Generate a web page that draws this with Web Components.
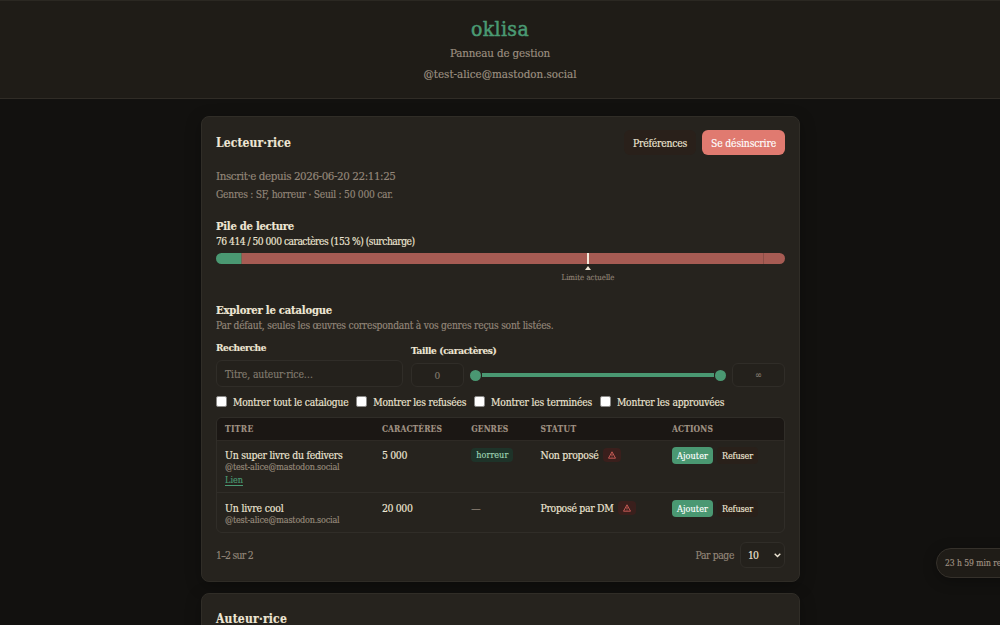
<!DOCTYPE html>
<html lang="fr">
<head>
<meta charset="utf-8">
<title>oklisa</title>
<style>
    html, body {
        height: 100%;
        margin: 0;
        overflow: hidden;
        background: #12110f;
        font-family: "DejaVu Serif Condensed", "DejaVu Serif", serif;
        font-stretch: condensed;
        color: #eee6d5;
    }
</style>
</head>
<body>
<ok-app></ok-app>
<script>
// Single line of text spread over a fixed width
class OkText extends HTMLElement {
    constructor() {
        super()
        this.attachShadow({ mode: 'open' })
        this.shadowRoot.innerHTML = /*html*/`
        <style>
            :host { display: inline-block; white-space: nowrap; flex: none; font-size: 11px; -webkit-text-stroke: .15px currentColor; }
            span { display: inline-block; }
        </style>
        <span><slot></slot></span>
        `
    }

    connectedCallback() {
        const width = Number(this.getAttribute('w'))
        if(this.hasAttribute('size')) {
            this.style.fontSize = this.getAttribute('size') + 'px'
        }
        if(width) {
            const span = this.shadowRoot.querySelector('span')
            const natural = span.getBoundingClientRect().width
            const count = this.textContent.length
            span.style.letterSpacing = (width - natural) / count + 'px'
            this.style.width = width + 'px'
        }
    }
}

class OkHeader extends HTMLElement {
    constructor() {
        super()
        this.attachShadow({ mode: 'open' })
        this.shadowRoot.innerHTML = /*html*/`
        <style>
            :host {
                display: flex;
                flex-direction: column;
                align-items: center;
                box-sizing: border-box;
                height: 99px;
                padding-top: 10px;
                background: #1f1c17;
                border-top: 1px solid #2b2822;
                border-bottom: 1px solid #302c26;
                color: #9d9081;
            }
            h1 { margin: 0; height: 30px; line-height: 29px; font-weight: normal; color: #4a9a73; }
            h1 ok-text { -webkit-text-stroke: .5px currentColor; }
            p { margin: 0; height: 21px; line-height: 21px; }
        </style>
        <h1><ok-text w="58" size="21">oklisa</ok-text></h1>
        <p><ok-text w="100" size="11.5">Panneau de gestion</ok-text></p>
        <p><ok-text w="153" size="11.5">@test-alice@mastodon.social</ok-text></p>
        `
    }
}

class OkCard extends HTMLElement {
    constructor() {
        super()
        this.attachShadow({ mode: 'open' })
        this.shadowRoot.innerHTML = /*html*/`
        <style>
            :host {
                display: block;
                box-sizing: border-box;
                width: 599px;
                padding: 13px 14px;
                background: #26231e;
                border: 1px solid #302d27;
                border-radius: 8px;
                box-shadow: 0 4px 16px rgba(0, 0, 0, .28);
            }
            header { display: flex; align-items: center; gap: 6px; height: 25px; }
            h2 { display: flex; margin: 0 auto 0 0; padding-top: 2px; line-height: 25px; }
        </style>
        <header><h2><slot name="title"></slot></h2><slot name="actions"></slot></header>
        <slot></slot>
        `
    }
}

class OkButton extends HTMLElement {
    constructor() {
        super()
        this.attachShadow({ mode: 'open' })
        this.shadowRoot.innerHTML = /*html*/`
        <style>
            :host {
                display: inline-flex;
                align-items: center;
                justify-content: center;
                box-sizing: border-box;
                height: 25px;
                padding: 0 9px;
                border-radius: 6px;
                background: #29201a;
            }
            :host([small]) { height: 17px; padding: 0 5px; border-radius: 4px; }
            :host([kind=danger]) { background: #e07a70; color: #fff; }
            :host([kind=primary]) { background: #4a9872; color: #fff; }
        </style>
        <slot></slot>
        `
    }
}

class OkPile extends HTMLElement {
    constructor() {
        super()
        this.attachShadow({ mode: 'open' })
        this.shadowRoot.innerHTML = /*html*/`
        <style>
            :host { display: block; position: relative; height: 30px; margin-top: 5px; }
            .bar { display: flex; height: 11px; border-radius: 6px; overflow: hidden; }
            .bar i { box-sizing: border-box; background: #a65b53; border-right: 1px solid #8b4e47; }
            .bar i:first-child { width: 26px; background: #4a9872; border-color: #6c6b55; }
            .bar i:nth-child(2) { width: 522px; }
            .bar i:last-child { flex: 1; border: 0; }
            .limit {
                position: absolute;
                top: 0;
                left: 345.5px;
                width: 53px;
                display: flex;
                flex-direction: column;
                align-items: center;
                color: #8d8073;
            }
            .limit b { width: 2px; height: 11px; background: #f3eadb; }
            .limit svg { display: block; margin-top: 2px; width: 6px; height: 4px; }
            .limit ok-text { line-height: 12px; margin-top: 2px; }
        </style>
        <div class="bar"><i></i><i></i><i></i></div>
        <div class="limit">
            <b></b>
            <svg viewBox="0 0 6 4"><path d="M3 0L6 4H0Z" fill="#eee6d5"/></svg>
            <ok-text w="53" size="7.8">Limite actuelle</ok-text>
        </div>
        `
    }
}

class OkField extends HTMLElement {
    constructor() {
        super()
        this.attachShadow({ mode: 'open' })
        this.shadowRoot.innerHTML = /*html*/`
        <style>
            :host {
                display: flex;
                align-items: center;
                box-sizing: border-box;
                height: 24px;
                padding: 0 8px;
                border: 1px solid #302d28;
                border-radius: 6px;
                background: #24211c;
                color: #837c70;
            }
            :host([center]) { justify-content: center; }
        </style>
        <slot></slot>
        `
    }
}

class OkRange extends HTMLElement {
    constructor() {
        super()
        this.attachShadow({ mode: 'open' })
        this.shadowRoot.innerHTML = /*html*/`
        <style>
            :host { display: flex; align-items: center; gap: 1px; height: 24px; }
            i { width: 11px; height: 11px; border-radius: 50%; background: #4a9872; }
            b { flex: 1; height: 4px; background: #4a9872; }
        </style>
        <i></i><b></b><i></i>
        `
    }
}

class OkCheck extends HTMLElement {
    constructor() {
        super()
        this.attachShadow({ mode: 'open' })
        this.shadowRoot.innerHTML = /*html*/`
        <style>
            :host { display: flex; align-items: center; gap: 6px; height: 15px; }
            i { box-sizing: border-box; width: 11px; height: 11px; background: #fff; border: 1px solid #8a8987; border-radius: 2px; }
        </style>
        <i></i><slot></slot>
        `
    }
}

class OkTag extends HTMLElement {
    constructor() {
        super()
        this.attachShadow({ mode: 'open' })
        this.shadowRoot.innerHTML = /*html*/`
        <style>
            :host {
                display: inline-flex;
                align-items: center;
                justify-content: center;
                box-sizing: border-box;
                height: 14px;
                padding: 0 5px;
                border-radius: 4px;
                background: #1e3329;
                color: #9fd5b5;
            }
            :host([warn]) { width: 18px; background: #3a1f1c; }
            svg { width: 8px; height: 8px; }
            :host(:not([warn])) svg { display: none; }
        </style>
        <svg viewBox="0 0 8 8" fill="none" stroke="#d4605a" stroke-width=".9" stroke-linejoin="round">
            <path d="M4 .8L7.5 7.2H.5ZM4 2.8V5M4 5.6V6.4"/>
        </svg>
        <slot></slot>
        `
    }
}

class OkCatalogue extends HTMLElement {
    constructor() {
        super()
        this.attachShadow({ mode: 'open' })
        this.shadowRoot.innerHTML = /*html*/`
        <style>
            :host {
                display: block;
                box-sizing: border-box;
                height: 116px;
                margin-top: 8px;
                border: 1px solid #302d28;
                border-radius: 6px;
                overflow: hidden;
            }
            .row {
                display: grid;
                grid-template-columns: 157px 89.3px 69.2px 131.5px 1fr;
                box-sizing: border-box;
                padding-left: 8px;
            }
            .head { height: 23px; align-items: center; background: #1b1714; color: #a09283; font-weight: bold; border-bottom: 1px solid #2e2a25; }
            .head div { display: flex; }
            .book { height: 52px; padding-top: 6px; border-bottom: 1px solid #302d28; }
            .book:last-child { height: 40px; padding-top: 7px; border: 0; }
            .line { display: flex; align-items: center; gap: 5px; height: 15px; }
            .actions { gap: 4px; height: 17px; }
            .author { height: 10px; color: #988b7c; }
            .link { height: 15px; color: #4a9a73; }
            .link u { display: flex; align-items: center; height: 10px; margin-top: 1px; border-bottom: 1px solid #4a9a73; text-decoration: none; }
            .muted { color: #94877a; }
        </style>
        <div class="row head">
            <div><ok-text w="28.5" size="8.4">TITRE</ok-text></div>
            <div><ok-text w="60" size="8.4">CARACTÈRES</ok-text></div>
            <div><ok-text w="37" size="8.4">GENRES</ok-text></div>
            <div><ok-text w="36" size="8.4">STATUT</ok-text></div>
            <div><ok-text w="41" size="8.4">ACTIONS</ok-text></div>
        </div>
        <div class="row book">
            <div>
                <div class="line"><ok-text w="117.5" size="10.4">Un super livre du fedivers</ok-text></div>
                <div class="line author"><ok-text w="114.5" size="9">@test-alice@mastodon.social</ok-text></div>
                <div class="line link"><u><ok-text w="18" size="9">Lien</ok-text></u></div>
            </div>
            <div class="line"><ok-text w="25" size="10.4">5 000</ok-text></div>
            <div class="line"><ok-tag><ok-text w="32" size="9">horreur</ok-text></ok-tag></div>
            <div class="line"><ok-text w="58" size="10.4">Non proposé</ok-text><ok-tag warn></ok-tag></div>
            <div class="line actions">
                <ok-button small kind="primary"><ok-text w="31" size="9">Ajouter</ok-text></ok-button>
                <ok-button small><ok-text w="31" size="9">Refuser</ok-text></ok-button>
            </div>
        </div>
        <div class="row book">
            <div>
                <div class="line"><ok-text w="58.5" size="10.4">Un livre cool</ok-text></div>
                <div class="line author"><ok-text w="114.5" size="9">@test-alice@mastodon.social</ok-text></div>
            </div>
            <div class="line"><ok-text w="30.5" size="10.4">20 000</ok-text></div>
            <div class="line muted"><ok-text w="10" size="10.4">—</ok-text></div>
            <div class="line"><ok-text w="73" size="10.4">Proposé par DM</ok-text><ok-tag warn></ok-tag></div>
            <div class="line actions">
                <ok-button small kind="primary"><ok-text w="31" size="9">Ajouter</ok-text></ok-button>
                <ok-button small><ok-text w="31" size="9">Refuser</ok-text></ok-button>
            </div>
        </div>
        `
    }
}

class OkApp extends HTMLElement {
    constructor() {
        super()
        this.attachShadow({ mode: 'open' })
        this.shadowRoot.innerHTML = /*html*/`
        <style>
            :host { display: block; height: 625px; overflow: hidden; position: relative; }
            main { display: flex; flex-direction: column; gap: 11px; width: 599px; margin: 17px 0 0 201px; }
            .line { display: flex; align-items: center; }
            .since { height: 20px; margin-top: 11px; }
            .genres { height: 16px; }
            .title { height: 17px; margin-top: 15px; font-weight: bold; }
            .explore { height: 16px; margin-top: 19px; }
            .count, .hint { height: 14px; }
            .muted { color: #94877a; }
            .filters { display: flex; gap: 8px; align-items: flex-end; height: 47px; margin-top: 8px; }
            .search { width: 187px; }
            .search ok-field { height: 27px; margin-top: 5px; }
            .size { flex: 1; }
            .label { height: 16px; font-weight: bold; }
            .controls { display: flex; margin-top: 5px; }
            .controls ok-field { width: 53px; }
            .controls ok-range { flex: 1; margin: 0 6px; }
            .checks { display: flex; gap: 7.8px; margin-top: 7px; }
            .checks ok-text { padding-top: 1px; }
            .foot { height: 26px; margin-top: 9px; gap: 6px; }
            .foot .muted { display: flex; margin-right: auto; }
            .foot .muted + .muted { margin-right: 0; }
            .foot ok-field { width: 45px; height: 26px; color: #eee6d5; gap: 16px; padding: 0 3px 0 7px; }
            ok-text[slot=title] { font-weight: bold; }
            .second { height: 120px; padding-top: 12px; }
            .session {
                position: absolute;
                top: 548px;
                left: 936px;
                box-sizing: border-box;
                width: 130px;
                height: 30px;
                padding-left: 8px;
                border: 1px solid #35312b;
                border-radius: 15px;
                background: #1f1c17;
                color: #a09384;
                box-shadow: 0 3px 14px rgba(0, 0, 0, .3);
            }
        </style>
        <ok-header></ok-header>
        <main>
            <ok-card>
                <ok-text slot="title" w="75" size="12">Lecteur·rice</ok-text>
                <ok-button slot="actions"><ok-text w="54" size="10.3">Préférences</ok-text></ok-button>
                <ok-button slot="actions" kind="danger"><ok-text w="65" size="10.3">Se désinscrire</ok-text></ok-button>
                <div class="line since muted"><ok-text w="179.5" size="11.5">Inscrit·e depuis 2026-06-20 22:11:25</ok-text></div>
                <div class="line genres muted"><ok-text w="177" size="10.2">Genres : SF, horreur · Seuil : 50 000 car.</ok-text></div>
                <div class="line title"><ok-text w="78" size="11.2">Pile de lecture</ok-text></div>
                <div class="line count"><ok-text w="198.5" size="10.2">76 414 / 50 000 caractères (153 %) (surcharge)</ok-text></div>
                <ok-pile></ok-pile>
                <div class="line title explore"><ok-text w="116" size="11.2">Explorer le catalogue</ok-text></div>
                <div class="line hint muted"><ok-text w="337.5" size="10.2">Par défaut, seules les œuvres correspondant à vos genres reçus sont listées.</ok-text></div>
                <div class="filters">
                    <div class="search">
                        <div class="line label"><ok-text w="50" size="10">Recherche</ok-text></div>
                        <ok-field><ok-text w="88" size="10.3">Titre, auteur·rice…</ok-text></ok-field>
                    </div>
                    <div class="size">
                        <div class="line label"><ok-text w="85.5" size="10">Taille (caractères)</ok-text></div>
                        <div class="controls">
                            <ok-field center><ok-text w="6" size="10">0</ok-text></ok-field>
                            <ok-range></ok-range>
                            <ok-field center><ok-text w="7" size="9">∞</ok-text></ok-field>
                        </div>
                    </div>
                </div>
                <div class="checks">
                    <ok-check><ok-text w="115.5" size="10.2">Montrer tout le catalogue</ok-text></ok-check>
                    <ok-check><ok-text w="93" size="10.2">Montrer les refusées</ok-text></ok-check>
                    <ok-check><ok-text w="101" size="10.2">Montrer les terminées</ok-text></ok-check>
                    <ok-check><ok-text w="107.5" size="10.2">Montrer les approuvées</ok-text></ok-check>
                </div>
                <ok-catalogue></ok-catalogue>
                <div class="line foot">
                    <span class="muted"><ok-text w="37" size="10.3">1–2 sur 2</ok-text></span>
                    <span class="muted"><ok-text w="38.5" size="10.3">Par page</ok-text></span>
                    <ok-field>
                        <ok-text w="10" size="10.3">10</ok-text>
                        <svg width="7" height="5" viewBox="0 0 7 5" fill="none" stroke="#eee6d5" stroke-width="1.4"><path d="M.7 .8L3.5 3.6L6.3 .8"/></svg>
                    </ok-field>
                </div>
            </ok-card>
            <ok-card class="second">
                <ok-text slot="title" w="71" size="12">Auteur·rice</ok-text>
            </ok-card>
        </main>
        <div class="line session"><ok-text w="84" size="8.5">23 h 59 min restantes</ok-text></div>
        `
    }
}

customElements.define('ok-text', OkText)
customElements.define('ok-header', OkHeader)
customElements.define('ok-button', OkButton)
customElements.define('ok-card', OkCard)
customElements.define('ok-pile', OkPile)
customElements.define('ok-field', OkField)
customElements.define('ok-range', OkRange)
customElements.define('ok-check', OkCheck)
customElements.define('ok-tag', OkTag)
customElements.define('ok-catalogue', OkCatalogue)
customElements.define('ok-app', OkApp)
</script>
</body>
</html>
